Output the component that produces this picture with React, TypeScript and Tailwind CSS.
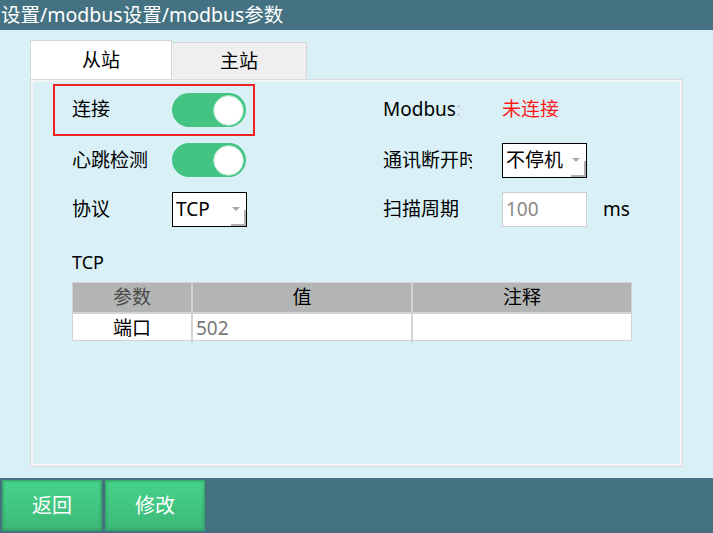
import React from 'react';

const FONT = { fontFamily: '"Noto Sans", "Noto Sans CJK SC", sans-serif' };

const Toggle: React.FC<{ on: boolean }> = ({ on }) => (
  <div
    className={`w-[74px] h-[34px] rounded-full flex items-center px-[2px] ${
      on ? 'bg-[#43c483] justify-end' : 'bg-gray-300 justify-start'
    }`}
  >
    <div className="w-[31px] h-[31px] rounded-full bg-white border border-[#8fdcb5]" />
  </div>
);

const Select: React.FC<{ value: string; width: string }> = ({ value, width }) => (
  <div className={`relative ${width} h-[35px] bg-white border border-black flex items-center pl-[3px] text-[19px] text-black`}>
    <span>{value}</span>
    <span className="absolute right-[6px] top-[14px] w-0 h-0 border-l-[4px] border-r-[4px] border-t-[4px] border-l-transparent border-r-transparent border-t-[#a8a8a8]" />
    <span className="absolute right-0 bottom-0 w-[15px] h-[16px] border-r-2 border-b-2 border-[#b0b0b0]" />
  </div>
);

export default function App() {
  return (
    <div style={FONT} className="w-[713px] h-[533px] flex flex-col bg-[#d9f0f7] overflow-hidden">
      {/* 标题栏 */}
      <div className="h-[30px] bg-[#457282] flex items-center pl-[1px] text-white text-[19.5px]">
        设置/modbus设置/modbus参数
      </div>

      <div className="flex-1 flex flex-col pl-[30px] pr-[30px] pt-[10px] pb-[12px]">
        {/* tabs */}
        <div className="h-[40px] flex items-end">
          <div className="w-[142px] h-[40px] bg-white border border-[#d6d6d6] border-b-0 flex items-center justify-center text-[19px] text-black">
            从站
          </div>
          <div className="w-[135px] h-[38px] bg-[#efefef] border border-[#d6d6d6] border-l-0 border-b-0 flex items-center justify-center text-[19px] text-black">
            主站
          </div>
        </div>

        {/* 面板 */}
        <div className="flex-1 border-2 border-[#f4f4f4] outline outline-1 outline-[#dadada] ml-[1px] mr-[1px] pt-[2px]">
          {/* row 1 */}
          <div className="h-[52px] flex items-center">
            <div className="ml-[20px] w-[202px] h-[52px] border-2 border-[#ee2222] flex items-center pl-[17px]">
              <span className="w-[100px] text-[19px] text-black leading-[24px] -mt-[2px]">连接</span>
              <Toggle on />
            </div>
            <span className="ml-[128px] w-[119px] text-[19px] text-black -mt-[2px]">
              Modbus<span className="text-[#c8c8c8]">:</span>
            </span>
            <span className="text-[19px] text-[#ff1a1a] -mt-[2px]">未连接</span>
          </div>

          {/* row 2 */}
          <div className="h-[48px] flex items-center">
            <span className="ml-[39px] w-[100px] text-[19px] text-black">心跳检测</span>
            <Toggle on />
            <span className="ml-[137px] w-[89px] overflow-hidden whitespace-nowrap text-[19px] text-black">
              通讯断开时
            </span>
            <span className="ml-[30px]">
              <Select value="不停机" width="w-[85px]" />
            </span>
          </div>

          {/* row 3 */}
          <div className="h-[50px] flex items-center">
            <span className="ml-[39px] w-[100px] text-[19px] text-black">协议</span>
            <Select value="TCP" width="w-[75px]" />
            <span className="ml-[136px] w-[119px] text-[19px] text-black">扫描周期</span>
            <div className="w-[85px] h-[35px] bg-white border border-[#cfcfcf] flex items-center pl-[3px] text-[19px] text-[#8a8a8a]">
              100
            </div>
            <span className="ml-[16px] text-[19px] text-black">ms</span>
          </div>

          {/* TCP */}
          <div className="mt-[16px] ml-[39px] h-[24px] flex items-center text-[18px] text-black">TCP</div>

          <div className="mt-[8px] ml-[39px] w-[560px] border border-[#d4d4d4] text-[19px]">
            <div className="grid grid-cols-[120px_220px_1fr] h-[29px] bg-[#b3b5b4]">
              <div className="flex items-center justify-center text-[#4a4a4a] border-r-2 border-[#d4d4d4]">参数</div>
              <div className="flex items-center justify-center text-black border-r-2 border-[#d4d4d4]">值</div>
              <div className="flex items-center justify-center text-black">注释</div>
            </div>
            <div className="grid grid-cols-[120px_220px_1fr] h-[28px] bg-white border-t-2 border-[#d4d4d4]">
              <div className="flex items-center justify-center text-black border-r-2 border-[#d4d4d4]">端口</div>
              <div className="flex items-center pl-[3px] text-[#777777] border-r-2 border-[#d4d4d4]">502</div>
              <div />
            </div>
          </div>
        </div>
      </div>

      {/* 底部按钮 */}
      <div className="h-[55px] bg-[#44717f] flex items-start gap-[3px] pl-[2px] pt-[2px]">
        {['返回', '修改'].map((label) => (
          <button
            key={label}
            className="w-[100px] h-[51px] bg-gradient-to-b from-[#46d389] to-[#3db878] border border-[#38a86c] shadow-[inset_0_0_3px_rgba(0,0,0,0.25)] text-white text-[20px] flex items-center justify-center"
          >
            {label}
          </button>
        ))}
      </div>
    </div>
  );
}
